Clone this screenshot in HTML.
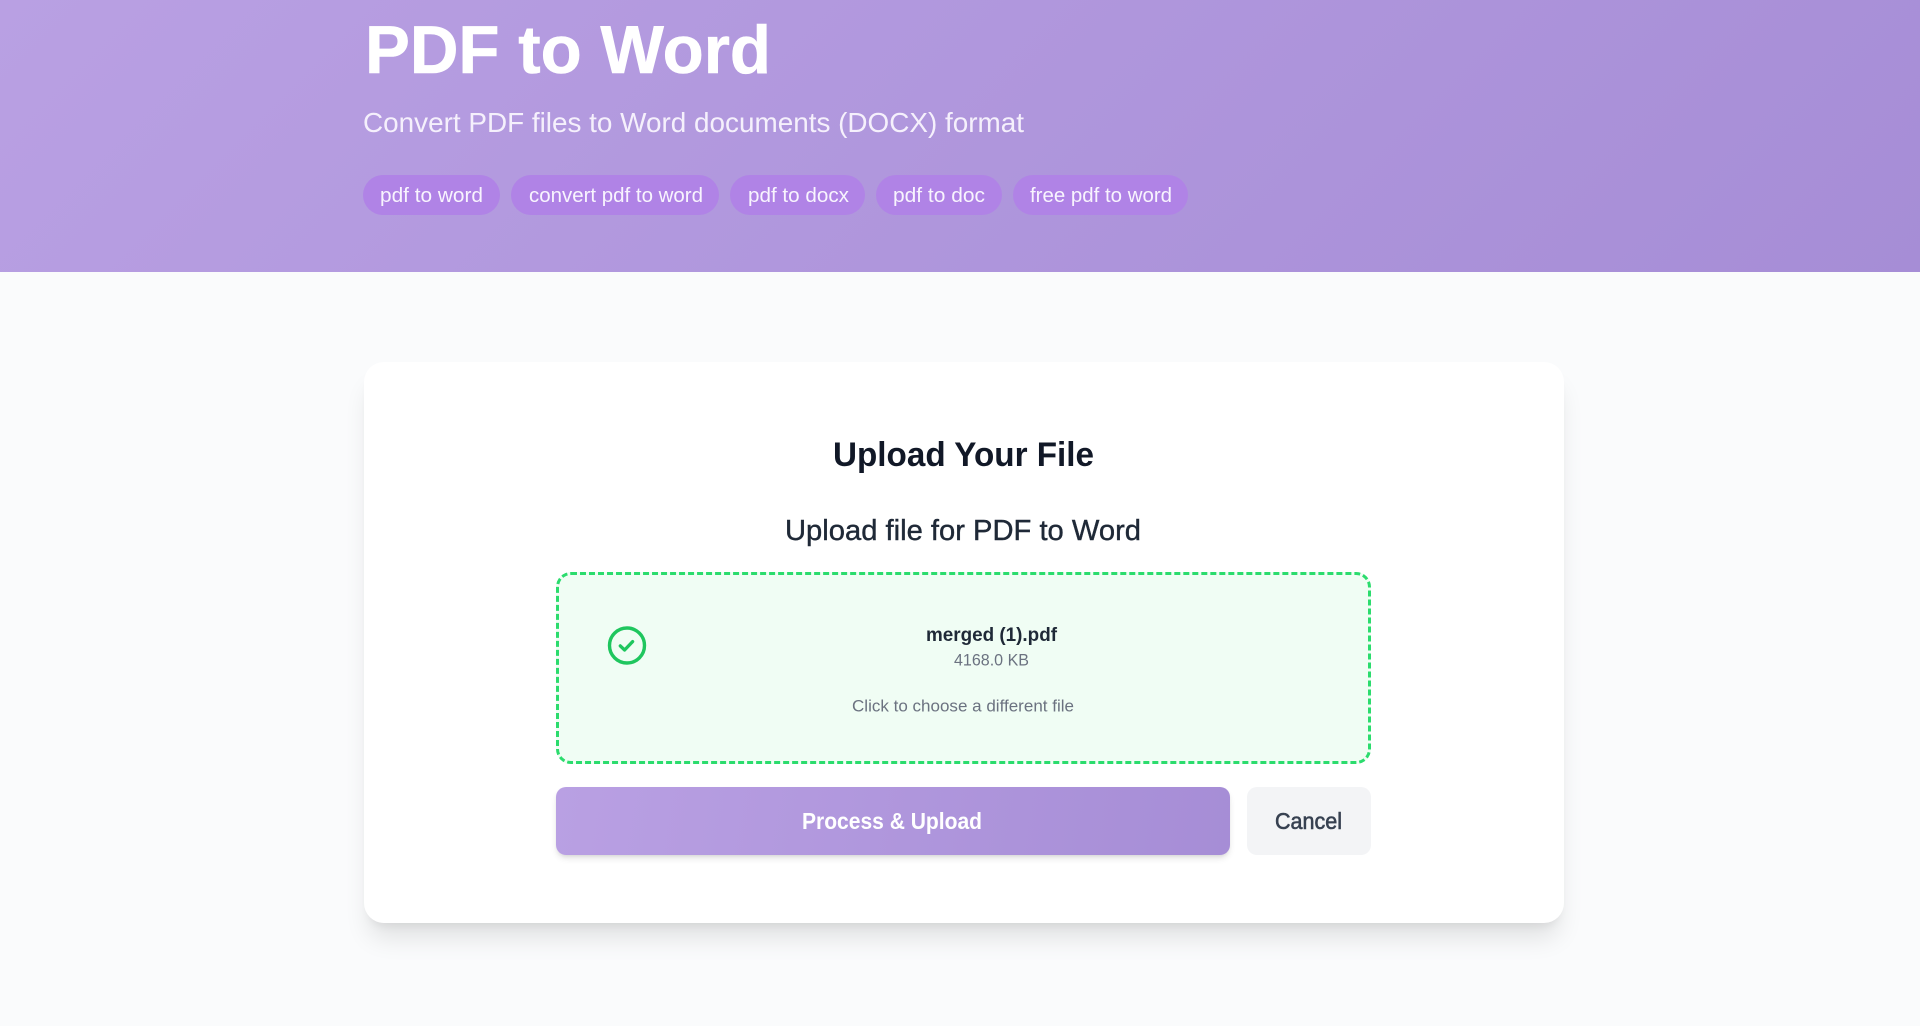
<!DOCTYPE html>
<html lang="en">
<head>
<meta charset="utf-8">
<title>PDF to Word</title>
<style>
html,body{margin:0;padding:0;width:1920px;height:1026px;overflow:hidden;background:#fafbfc;font-family:"Liberation Sans",sans-serif}
.abs{position:absolute;box-sizing:border-box}
#hero{left:0;top:0;width:1920px;height:272px;background:linear-gradient(135deg,#b9a0e3 0%,#a68dd6 100%)}
.tag{top:175px;height:40px;border-radius:20px;background:#b083e6}
#card{left:364px;top:362px;width:1200px;height:561px;background:#fff;border-radius:20px;box-shadow:0 20px 25px -5px rgba(0,0,0,.1),0 8px 10px -6px rgba(0,0,0,.08)}
#drop{left:556px;top:572px;width:815px;height:192px;background:#f0fdf4;border:3px dashed #2bdc6d;border-radius:15px}
#go{left:556px;top:787px;width:674px;height:68px;border-radius:10px;background:linear-gradient(100deg,#b9a0e3 0%,#a68dd6 100%);box-shadow:0 4px 7px -1px rgba(0,0,0,.12),0 2px 4px -2px rgba(0,0,0,.1)}
#cancel{left:1247px;top:787px;width:124px;height:68px;border-radius:10px;background:#f3f4f6}
svg{position:absolute;left:0;top:0}
text{font-family:"Liberation Sans",sans-serif}
</style>
</head>
<body>
<div class="abs" id="hero"></div>
<div class="abs tag" style="left:363px;width:137px"></div>
<div class="abs tag" style="left:511px;width:208px"></div>
<div class="abs tag" style="left:730px;width:135px"></div>
<div class="abs tag" style="left:876px;width:126px"></div>
<div class="abs tag" style="left:1013px;width:175px"></div>
<div class="abs" id="card"></div>
<div class="abs" id="drop"></div>
<div class="abs" id="go"></div>
<div class="abs" id="cancel"></div>
<svg width="1920" height="1026" viewBox="0 0 1920 1026" xmlns="http://www.w3.org/2000/svg">
  <text x="365" y="73" font-size="68" font-weight="700" fill="#fff" stroke="#fff" stroke-width=".6" textLength="406" lengthAdjust="spacingAndGlyphs">PDF to Word</text>
  <text x="363" y="132" font-size="28" fill="#f5f0fc" textLength="661" lengthAdjust="spacingAndGlyphs">Convert PDF files to Word documents (DOCX) format</text>
  <g font-size="20.5" fill="#f8f4fe">
    <text x="380" y="202" textLength="103" lengthAdjust="spacingAndGlyphs">pdf to word</text>
    <text x="529" y="202" textLength="174" lengthAdjust="spacingAndGlyphs">convert pdf to word</text>
    <text x="748" y="202" textLength="101" lengthAdjust="spacingAndGlyphs">pdf to docx</text>
    <text x="893" y="202" textLength="92" lengthAdjust="spacingAndGlyphs">pdf to doc</text>
    <text x="1030" y="202" textLength="142" lengthAdjust="spacingAndGlyphs">free pdf to word</text>
  </g>
  <text x="833" y="466" font-size="34" font-weight="700" fill="#111827" textLength="261" lengthAdjust="spacingAndGlyphs">Upload Your File</text>
  <text x="785" y="540" font-size="29" fill="#1f2937" stroke="#1f2937" stroke-width=".4" textLength="356" lengthAdjust="spacingAndGlyphs">Upload file for PDF to Word</text>
  <circle cx="627" cy="645.5" r="17.5" fill="none" stroke="#1fc65e" stroke-width="3.4"/>
  <path d="M620.3 645.9 L624.6 650 L632.6 641.6" fill="none" stroke="#1fc65e" stroke-width="3.3" stroke-linecap="round" stroke-linejoin="round"/>
  <text x="926" y="641" font-size="19" font-weight="700" fill="#1f2937" textLength="131" lengthAdjust="spacingAndGlyphs">merged (1).pdf</text>
  <text x="954" y="665.5" font-size="17" fill="#6b7280" textLength="75" lengthAdjust="spacingAndGlyphs">4168.0 KB</text>
  <text x="852" y="711.5" font-size="17" fill="#6b7280" textLength="222" lengthAdjust="spacingAndGlyphs">Click to choose a different file</text>
  <text x="802" y="829" font-size="23" font-weight="700" fill="#fff" textLength="180" lengthAdjust="spacingAndGlyphs">Process &amp; Upload</text>
  <text x="1275" y="829" font-size="23" fill="#374151" stroke="#374151" stroke-width=".6" textLength="67" lengthAdjust="spacingAndGlyphs">Cancel</text>
</svg>
</body>
</html>
